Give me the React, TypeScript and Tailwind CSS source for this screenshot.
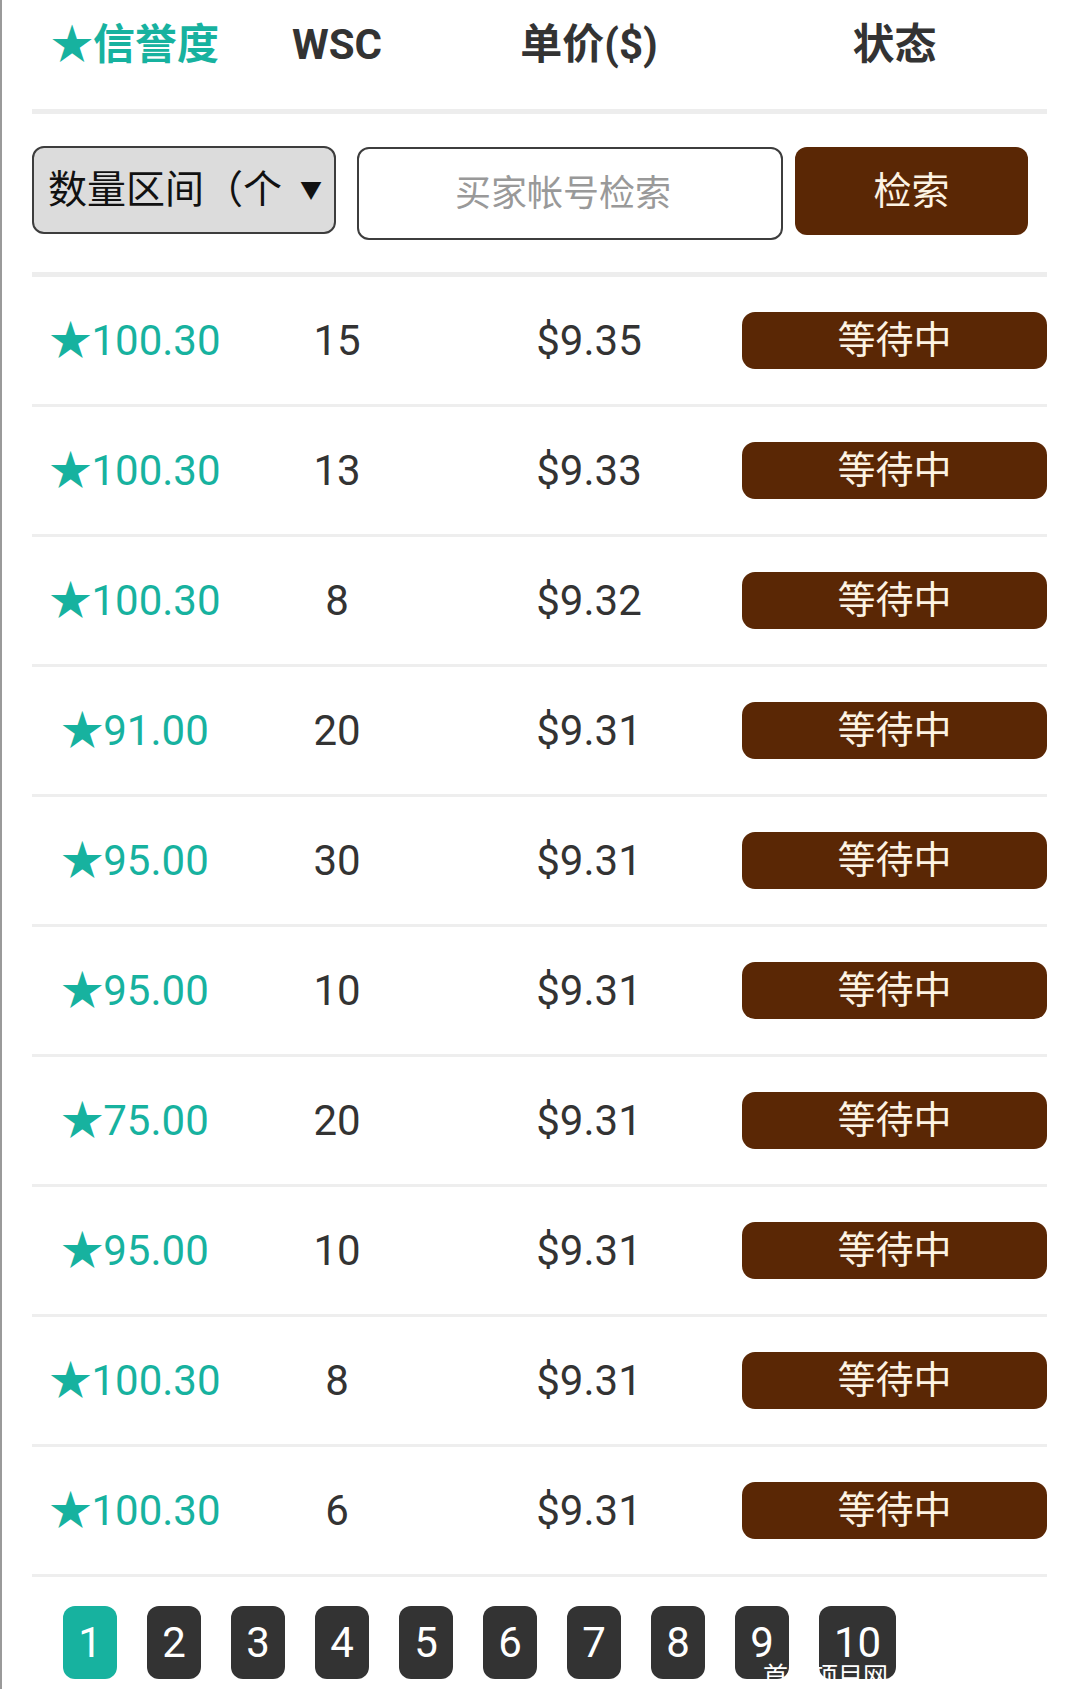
const rows = [
  { score: '100.30', wsc: '15', price: '$9.35' },
  { score: '100.30', wsc: '13', price: '$9.33' },
  { score: '100.30', wsc: '8', price: '$9.32' },
  { score: '91.00', wsc: '20', price: '$9.31' },
  { score: '95.00', wsc: '30', price: '$9.31' },
  { score: '95.00', wsc: '10', price: '$9.31' },
  { score: '75.00', wsc: '20', price: '$9.31' },
  { score: '95.00', wsc: '10', price: '$9.31' },
  { score: '100.30', wsc: '8', price: '$9.31' },
  { score: '100.30', wsc: '6', price: '$9.31' },
]

const pages = ['1', '2', '3', '4', '5', '6', '7', '8', '9', '10']

const font = 'font-["Roboto","Noto_Sans_CJK_SC",sans-serif]'

export default function App() {
  return (
    <div className={`relative w-[1080px] h-[1689px] overflow-hidden bg-white border-l-2 border-[#9a9a9a] ${font}`}>
      <div className="ml-[30px] w-[1015px]">

        {/* Header */}
        <div className="grid grid-cols-[206px_198px_306px_305px] h-[109px] pb-[20px] items-center text-center text-[42px] font-bold text-[#333]">
          <div className="text-[#17b29f]">★信誉度</div>
          <div>WSC</div>
          <div>单价($)</div>
          <div>状态</div>
        </div>
        <div className="h-[5px] bg-[#ededed]"></div>

        {/* Filter */}
        <div className="h-[158px] flex items-start pt-[32px]">
          <div className="w-[304px] h-[88px] rounded-[12px] border-2 border-[#3d3d3d] bg-[#dcdcdc] flex items-center pl-[14px] pr-[12px]">
            <span className="flex-1 whitespace-nowrap text-[39px] text-[#111]">数量区间（个</span>
            <span className="text-[22px] text-[#111]">▼</span>
          </div>
          <div className="ml-[21px] mt-[1px] w-[426px] h-[93px] rounded-[12px] border-2 border-[#3d3d3d] bg-white flex items-center justify-center pr-[14px] text-[36px] text-[#999]">
            买家帐号检索
          </div>
          <div className="ml-[12px] mt-[1px] w-[233px] h-[88px] rounded-[12px] bg-[#5a2705] flex items-center justify-center text-[38px] text-[#fdf3e3]">
            检索
          </div>
        </div>
        <div className="h-[5px] bg-[#ededed]"></div>

        {/* Rows */}
        {rows.map((r, i) => (
          <div key={i} className="grid grid-cols-[206px_198px_306px_305px] h-[130px] items-center text-center text-[42px] border-b-[3px] border-[#eeeeee]">
            <div className="text-[#17b29f]">★{r.score}</div>
            <div className="text-[#333]">{r.wsc}</div>
            <div className="text-[#333]">{r.price}</div>
            <div className="h-[57px] rounded-[13px] bg-[#5a2705] flex items-center justify-center text-[38px] text-[#fdf3e3]">
              等待中
            </div>
          </div>
        ))}

        {/* Pagination */}
        <div className="flex gap-[30px] pl-[31px] pt-[29px]">
          {pages.map((p, i) => (
            <div key={p}
              className={`h-[73px] ${p === '10' ? 'w-[77px]' : 'w-[54px]'} rounded-[12px] flex items-center justify-center text-[42px] text-white ${i === 0 ? 'bg-[#17b29f]' : 'bg-[#333333]'}`}>
              {p}
            </div>
          ))}
        </div>
      </div>

      {/* watermark */}
      <div className="absolute left-[761px] top-[1662px] text-[25px] leading-none text-white font-['Noto_Sans_CJK_SC',sans-serif] whitespace-nowrap">
        首码项目网
      </div>
    </div>
  )
}
